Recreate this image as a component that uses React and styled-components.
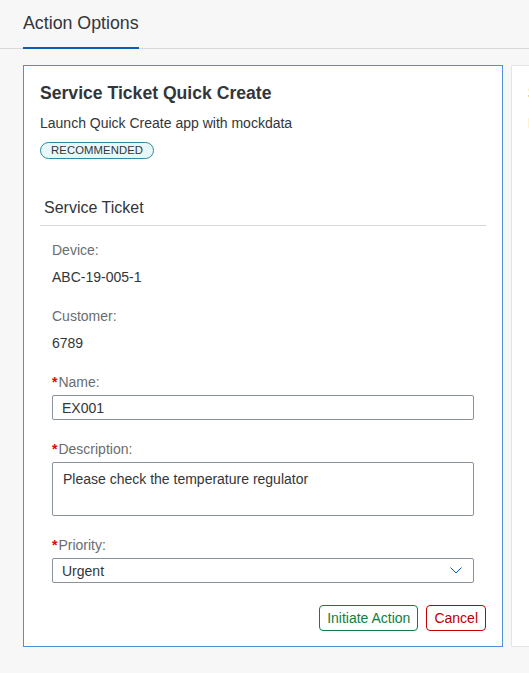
import React from "react";
import styled, { createGlobalStyle } from "styled-components";

const GlobalStyle = createGlobalStyle`
  html, body {
    margin: 0;
    padding: 0;
    background: #f7f7f7;
    font-family: "Liberation Sans", Arial, sans-serif;
    color: #32363a;
  }
  * { box-sizing: border-box; }
`;

const Page = styled.div`
  width: 529px;
  height: 673px;
  overflow: hidden;
  background: #f7f7f7;
`;

const Header = styled.div`
  height: 49px;
  padding: 0 23px;
  border-bottom: 1px solid #d9d9d9;
  display: flex;
  align-items: flex-start;
`;

const Tab = styled.div`
  padding-top: 12px;
  padding-bottom: 13px;
  font-size: 17.8px;
  line-height: 22px;
  color: #32363a;
  border-bottom: 2px solid ${(p) => (p.$active ? "#0a5cb4" : "transparent")};
  margin-bottom: -1px;
`;

const Content = styled.div`
  display: flex;
  gap: 8px;
  padding: 16px 0 0 23px;
  align-items: stretch;
`;

const Card = styled.div`
  flex: 0 0 480px;
  width: 480px;
  background: #fff;
  border: 1px solid ${(p) => (p.$selected ? "#4d8fd8" : "#e5e5e5")};
  padding: 16px 16px 15px;
  display: flex;
  flex-direction: column;
  overflow: hidden;
`;

const Title = styled.h2`
  margin: 0;
  font-size: 17.6px;
  line-height: 22px;
  font-weight: 700;
  color: #32363a;
  white-space: nowrap;
`;

const Subtitle = styled.p`
  margin: 10px 0 0;
  font-size: 14px;
  line-height: 18px;
  color: #32363a;
  white-space: nowrap;
`;

const Badge = styled.span`
  align-self: flex-start;
  margin-top: 10px;
  display: inline-flex;
  align-items: center;
  height: 17px;
  padding: 0 10px;
  border: 1px solid #2a8c9c;
  border-radius: 9px;
  background: #e8f7fa;
  color: #32363a;
  font-size: 11.3px;
  line-height: 15px;
  letter-spacing: 0.1px;
  text-transform: uppercase;
`;

const SectionTitle = styled.div`
  margin-top: 39px;
  padding: 0 4px 7px;
  font-size: 16px;
  line-height: 20px;
  color: #32363a;
  border-bottom: 1px solid #d9d9d9;
`;

const Form = styled.div`
  padding: 15px 12px 0;
  display: flex;
  flex-direction: column;
`;

const Label = styled.div`
  font-size: 14px;
  line-height: 18px;
  color: #6a6d70;
  margin-top: ${(p) => p.$gap ?? 20}px;
`;

const Req = styled.span`
  color: #e00;
  font-weight: 700;
  margin-right: 1px;
`;

const Value = styled.div`
  margin-top: 8px;
  font-size: 14px;
  line-height: 20px;
  color: #32363a;
`;

const Input = styled.input`
  margin-top: 4px;
  width: 100%;
  height: 25px;
  padding: 0 9px;
  border: 1px solid #89919a;
  border-radius: 2px;
  font: inherit;
  font-size: 14px;
  color: #32363a;
  background: #fff;
  outline: none;
`;

const TextArea = styled.textarea`
  margin-top: 4px;
  width: 100%;
  height: 54px;
  padding: 7px 10px;
  border: 1px solid #89919a;
  border-radius: 2px;
  font: inherit;
  font-size: 14px;
  line-height: 18px;
  color: #32363a;
  background: #fff;
  resize: none;
  outline: none;
  display: block;
`;

const Select = styled.div`
  margin-top: 4px;
  height: 25px;
  padding: 0 11px 0 9px;
  border: 1px solid #89919a;
  border-radius: 2px;
  display: flex;
  align-items: center;
  justify-content: space-between;
  font-size: 14px;
  color: #32363a;
  background: #fff;
`;

const Actions = styled.div`
  margin-top: 22px;
  display: flex;
  justify-content: flex-end;
  gap: 8px;
`;

const Button = styled.button`
  height: 26px;
  padding: 0 7px;
  border: 1px solid ${(p) => p.$color};
  border-radius: 4px;
  background: #fff;
  color: ${(p) => p.$color};
  font-family: inherit;
  font-size: 14px;
  cursor: pointer;
`;

const Chevron = () => (
  <svg width="12" height="7" viewBox="0 0 12 7" fill="none">
    <path d="M0.5 0.5 L6 6 L11.5 0.5" stroke="#0a5cb4" strokeWidth="1" />
  </svg>
);

export default function App() {
  return (
    <Page>
      <GlobalStyle />
      <Header>
        <Tab $active>Action Options</Tab>
      </Header>
      <Content>
        <Card $selected>
          <Title>Service Ticket Quick Create</Title>
          <Subtitle>Launch Quick Create app with mockdata</Subtitle>
          <Badge>Recommended</Badge>
          <SectionTitle>Service Ticket</SectionTitle>
          <Form>
            <Label $gap={0}>Device:</Label>
            <Value>ABC-19-005-1</Value>
            <Label>Customer:</Label>
            <Value>6789</Value>
            <Label>
              <Req>*</Req>Name:
            </Label>
            <Input defaultValue="EX001" />
            <Label>
              <Req>*</Req>Description:
            </Label>
            <TextArea defaultValue="Please check the temperature regulator" />
            <Label>
              <Req>*</Req>Priority:
            </Label>
            <Select>
              <span>Urgent</span>
              <Chevron />
            </Select>
          </Form>
          <Actions>
            <Button $color="#107e3e">Initiate Action</Button>
            <Button $color="#bb0000">Cancel</Button>
          </Actions>
        </Card>
        <Card>
          <Title>Service Ticket Create</Title>
          <Subtitle>Launch Create app</Subtitle>
        </Card>
      </Content>
    </Page>
  );
}
